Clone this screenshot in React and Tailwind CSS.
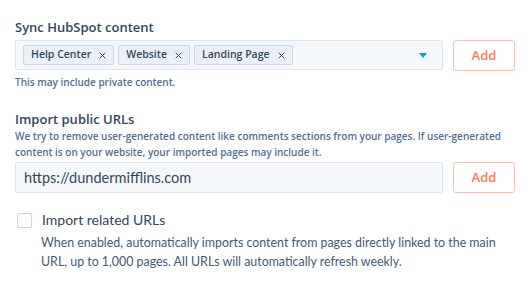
const openSans = { fontFamily: '"Open Sans", "Noto Sans", sans-serif' }
const lato = { fontFamily: 'Lato, "Open Sans", sans-serif' }

function Tag({ label }) {
  return (
    <span className="flex h-[20px] items-center gap-[8px] rounded-[2px] border border-[#cbd6e2] bg-[#eaf0f6] pl-[7px] pr-[7px] text-[10.5px] font-semibold text-[#33475b]">
      {label}
      <svg width="7" height="7" viewBox="0 0 10 10" stroke="currentColor" strokeWidth="1.4">
        <path d="M1 1l8 8M9 1L1 9" />
      </svg>
    </span>
  )
}

function AddButton() {
  return (
    <button className="h-[31px] w-[62px] shrink-0 rounded-[3px] border border-[#ffbca8] bg-white text-[13px] font-semibold text-[#ff7a59]">
      Add
    </button>
  )
}

export default function App() {
  return (
    <div className="h-[281px] w-[530px] bg-white px-[15px] pt-[18px] text-[#33475b]" style={openSans}>
      <h2 className="text-[13px] font-semibold leading-[18px]">Sync HubSpot content</h2>
      <div className="mt-[4px] flex items-start gap-[10px]">
        <div className="flex h-[30px] flex-1 items-center justify-between rounded-[2px] border border-[#dfe3eb] bg-[#f5f8fa] pl-[7px] pr-[15px]">
          <div className="flex gap-[4px]">
            <Tag label="Help Center" />
            <Tag label="Website" />
            <Tag label="Landing Page" />
          </div>
          <svg width="8" height="5" viewBox="0 0 8 5">
            <path d="M0 0h8L4 5z" fill="#00a4bd" />
          </svg>
        </div>
        <AddButton />
      </div>
      <p className="mt-[3px] text-[10px] font-semibold leading-[16px] text-[#516f90]">This may include private content.</p>

      <h2 className="mt-[20px] text-[13px] font-semibold leading-[18px]">Import public URLs</h2>
      <p className="text-[10px] font-semibold leading-[16px] text-[#516f90]">
        We try to remove user-generated content like comments sections from your pages. If user-generated content is on your website, your imported pages may include it.
      </p>
      <div className="mt-[2px] flex gap-[10px]">
        <div
          className="flex h-[31px] flex-1 items-center rounded-[2px] border border-[#dfe3eb] bg-[#f5f8fa] px-[8px] text-[14.5px]"
          style={lato}
        >
          https://dundermifflins.com
        </div>
        <AddButton />
      </div>

      <label className="mt-[18px] flex items-center gap-[10px]" style={lato}>
        <span className="ml-[2px] h-[15px] w-[15px] rounded-[2px] border border-[#cbd6e2] bg-white" />
        <span className="text-[14px] leading-[18px]">Import related URLs</span>
      </label>
      <p className="ml-[26px] mt-[4px] text-[12.4px] leading-[19px] text-[#425b76]" style={lato}>
        When enabled, automatically imports content from pages directly linked to the main URL, up to 1,000 pages. All URLs will automatically refresh weekly.
      </p>
    </div>
  )
}
